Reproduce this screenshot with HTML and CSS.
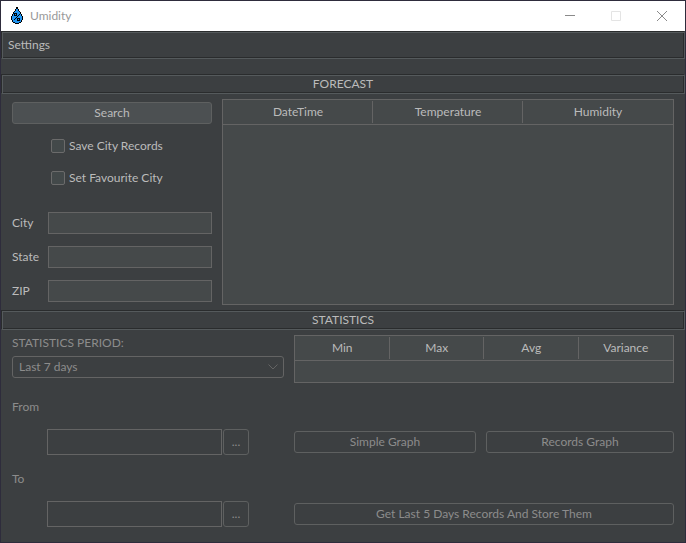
FILE: index.html
```html
<!DOCTYPE html>
<html lang="en">
<head>
<meta charset="utf-8">
<title>Umidity</title>
<link rel="stylesheet" href="styles.css">
</head>
<body>
<div class="window">
  <header class="titlebar">
    <svg class="app-icon" width="14" height="18" viewBox="0 0 14 18" shape-rendering="crispEdges" aria-hidden="true">
      <path fill="#000" d="M6 0h2v2h1v2h1v1h1v2h1v2h1v4h-1v2h-1v1H9v1H5v-1H3v-1H2v-2H1V9h1V7h1V5h1V4h1V2h1z"/>
      <path fill="#2196f3" d="M6 2h2v2h1v1h1v2h1v2h1v4h-1v2H9v1H5v-1H3v-2H2V9h1V7h1V5h1V4h1z"/>
      <path fill="#000" d="M4 6h3v3H4zM7 11h3v3H7zM9 7h1v1H9zM8 8h1v1H8zM7 9h1v1H7zM6 10h1v1H6zM5 11h1v1H5zM4 12h1v1H4z"/>
      <path fill="#2196f3" d="M5 7h1v1H5zM8 12h1v1H8z"/>
    </svg>
    <h1 class="title">Umidity</h1>
    <button class="win-btn" aria-label="Minimize"><svg width="10" height="10" viewBox="0 0 10 10"><path d="M0 4.5h10"/></svg></button>
    <button class="win-btn win-btn-off" aria-label="Maximize" disabled><svg width="10" height="10" viewBox="0 0 10 10"><path d="M.5.5h9v9h-9z"/></svg></button>
    <button class="win-btn" aria-label="Close"><svg width="10" height="10" viewBox="0 0 10 10"><path d="M0 0l10 10M10 0L0 10"/></svg></button>
  </header>
  <nav class="etched menubar"><button class="menu">Settings</button></nav>
  <main>
    <section>
      <h2 class="etched heading">FORECAST</h2>
      <div class="forecast">
        <form class="search">
          <button type="button" class="btn btn-primary">Search</button>
          <div class="checks">
            <label class="check"><input type="checkbox">Save City Records</label>
            <label class="check"><input type="checkbox">Set Favourite City</label>
          </div>
          <div class="fields">
            <label for="city">City</label><input class="field" id="city" type="text">
            <label for="state">State</label><input class="field" id="state" type="text">
            <label for="zip">ZIP</label><input class="field" id="zip" type="text">
          </div>
        </form>
        <div class="table-box">
          <table>
            <thead><tr><th>DateTime</th><th>Temperature</th><th>Humidity</th></tr></thead>
          </table>
        </div>
      </div>
    </section>
    <section>
      <h2 class="etched heading">STATISTICS</h2>
      <div class="statistics">
        <div class="period">
          <label for="period">STATISTICS PERIOD:</label>
          <select class="combo" id="period" disabled><option>Last 7 days</option></select>
        </div>
        <div class="table-box">
          <table>
            <thead><tr><th>Min</th><th>Max</th><th>Avg</th><th>Variance</th></tr></thead>
          </table>
        </div>
        <div class="date">
          <label for="from">From</label>
          <div class="picker"><input class="field" id="from" type="text" disabled><button class="btn more" aria-label="Pick start date" disabled>...</button></div>
        </div>
        <div class="actions">
          <button class="btn simple" disabled>Simple Graph</button>
          <button class="btn records" disabled>Records Graph</button>
        </div>
        <div class="date">
          <label for="to">To</label>
          <div class="picker"><input class="field" id="to" type="text" disabled><button class="btn more" aria-label="Pick end date" disabled>...</button></div>
        </div>
        <div class="actions">
          <button class="btn store" disabled>Get Last 5 Days Records And Store Them</button>
        </div>
      </div>
    </section>
  </main>
</div>
</body>
</html>
```
FILE: styles.css
```css
:root {
  --bg: #3c3f41;
  --field: #45494a;
  --line: #646464;
  --button-line: #5e6060;
  --text: #bbbbbb;
  --muted: #8c8c8c;
  --etch-dark: #2a2c2d;
  --etch-light: #555a5c;
}

* { box-sizing: border-box; }

body {
  margin: 0;
  background: var(--bg);
  color: var(--text);
  font: 12px/16px Lato, "Open Sans", sans-serif;
}

button, input, select { margin: 0; font: inherit; color: inherit; }

.window {
  min-height: 100vh;
  border: 1px solid #2e2c3c;
}

.titlebar {
  display: flex;
  align-items: center;
  height: 30px;
  padding-left: 9px;
  background: #fff;
}

.title {
  flex: 1;
  margin: 0 0 0 6px;
  font-size: 12px;
  font-weight: 400;
  color: #999;
}

.win-btn {
  display: grid;
  place-items: center;
  width: 46px;
  height: 28px;
  padding: 0;
  border: 0;
  background: none;
}

.win-btn svg { fill: none; stroke: #8a8a8a; }
.win-btn-off svg { stroke: #e4e4e4; }

.etched {
  border: 1px solid;
  border-color: var(--etch-dark) var(--etch-light) var(--etch-light) var(--etch-dark);
  box-shadow: inset 1px 1px var(--etch-light), inset -1px -1px var(--etch-dark);
}

.menubar {
  display: flex;
  align-items: center;
  height: 28px;
  margin-bottom: 15px;
  padding-left: 6px;
}

.menu { padding: 0; border: 0; background: none; }

.heading {
  height: 20px;
  margin: 0;
  font-size: 12px;
  font-weight: 400;
  line-height: 18px;
  text-align: center;
}

.forecast {
  display: grid;
  grid-template-columns: 200px 1fr;
  gap: 10px;
  padding: 5px 11px 5px 11px;
  min-height: 216px;
}

.search {
  display: flex;
  flex-direction: column;
  padding-top: 3px;
}

.btn {
  height: 22px;
  padding: 0;
  border: 1px solid var(--button-line);
  border-radius: 3px;
  background: var(--bg);
  line-height: 20px;
}

.btn:disabled { color: var(--muted); }

.btn-primary { background: #4c5052; }

.checks {
  display: grid;
  gap: 16px;
  margin: 14px 0 26px 39px;
}

.check { display: flex; align-items: center; gap: 4px; }

.check input {
  appearance: none;
  width: 14px;
  height: 14px;
  border: 1px solid #6b6b6b;
  border-radius: 2px;
  background: #43494a;
}

.fields {
  display: grid;
  grid-template-columns: 36px 1fr;
  align-items: center;
  row-gap: 12px;
}

.field {
  width: 100%;
  min-width: 0;
  height: 22px;
  padding: 0 4px;
  border: 1px solid var(--line);
  background: var(--field);
}

.field:disabled { background: var(--bg); }

.table-box {
  border: 1px solid var(--line);
  background: var(--field);
}

table {
  width: 100%;
  border-collapse: separate;
  border-spacing: 0;
  table-layout: fixed;
}

th {
  height: 25px;
  padding: 0;
  border-bottom: 1px solid var(--line);
  font-weight: 400;
  text-align: center;
}

th:not(:last-child) {
  background: linear-gradient(var(--line), var(--line)) right center / 1px 22px no-repeat;
}

.statistics {
  display: grid;
  grid-template-columns: 272px 1fr;
  column-gap: 10px;
  padding: 5px 11px 15px 11px;
  color: var(--muted);
}

.statistics .table-box { min-height: 48px; color: var(--text); }

.period { display: grid; gap: 5px; align-content: start; }

.combo {
  appearance: none;
  height: 22px;
  padding: 0 6px;
  border: 1px solid var(--line);
  border-radius: 3px;
  opacity: 1;
  background: var(--bg) url("data:image/svg+xml,%3Csvg xmlns='http://www.w3.org/2000/svg' width='10' height='6' fill='none' stroke='%23646464'%3E%3Cpath d='M.5.5L5 5L9.5.5'/%3E%3C/svg%3E") right 5px center no-repeat;
}

.date {
  display: grid;
  gap: 14px;
  padding-top: 16px;
}

.picker {
  display: grid;
  grid-template-columns: 175px 26px;
  gap: 1px;
  margin-left: 35px;
}

.picker .field, .more { height: 26px; }

.actions {
  display: flex;
  align-items: flex-end;
  gap: 10px;
  padding-bottom: 2px;
}

.simple { flex: 182; }
.records { flex: 188; }
.store { flex: 1; }
```
